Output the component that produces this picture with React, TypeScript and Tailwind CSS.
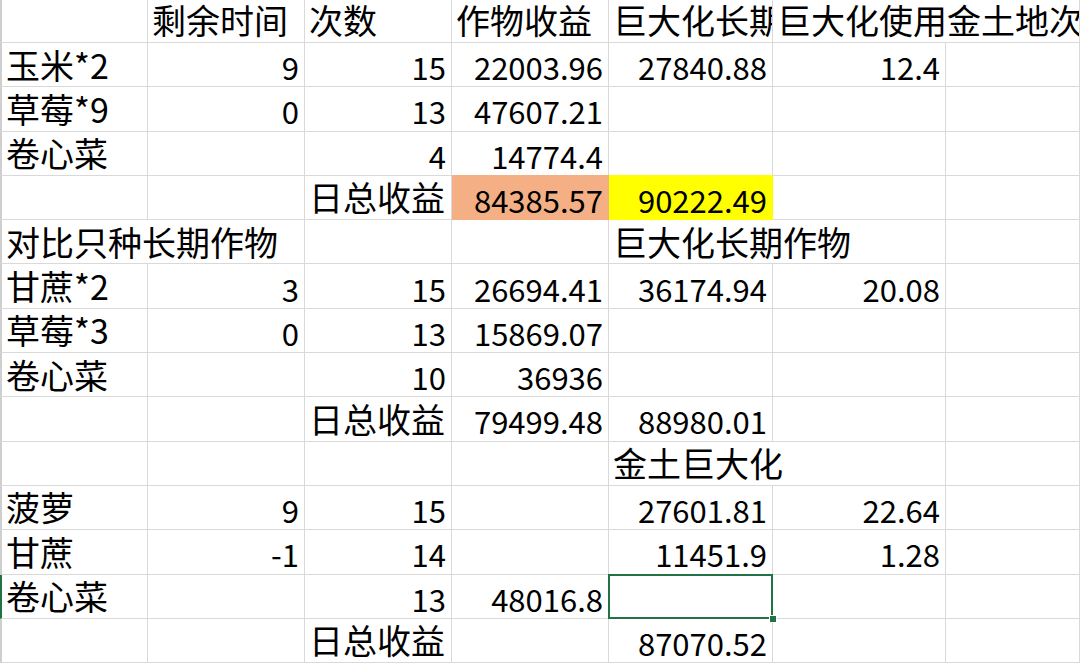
import React from 'react';

type Cell = {
  v?: string;
  num?: boolean;
  span?: number;
  bg?: string;
  sel?: boolean;
  clip?: boolean;
};

// column widths match the spreadsheet's visible columns
const colClass = 'grid-cols-[148px_157px_147px_157px_164px_173px_134px]';

const N = (v: string): Cell => ({ v, num: true });
const T = (v: string, span = 1): Cell => ({ v, span });
const E: Cell = {};

const rows: Cell[][] = [
  [E, T('剩余时间'), T('次数'), T('作物收益'), { v: '巨大化长期', clip: true }, { v: '巨大化使用金土地次', span: 2, clip: true }],
  [T('玉米*2'), N('9'), N('15'), N('22003.96'), N('27840.88'), N('12.4'), E],
  [T('草莓*9'), N('0'), N('13'), N('47607.21'), E, E, E],
  [T('卷心菜'), E, N('4'), N('14774.4'), E, E, E],
  [E, E, T('日总收益'), { v: '84385.57', num: true, bg: 'orange' }, { v: '90222.49', num: true, bg: 'yellow' }, E, E],
  [T('对比只种长期作物', 2), E, E, T('巨大化长期作物', 2), E],
  [T('甘蔗*2'), N('3'), N('15'), N('26694.41'), N('36174.94'), N('20.08'), E],
  [T('草莓*3'), N('0'), N('13'), N('15869.07'), E, E, E],
  [T('卷心菜'), E, N('10'), N('36936'), E, E, E],
  [E, E, T('日总收益'), N('79499.48'), N('88980.01'), E, E],
  [E, E, E, E, T('金土巨大化', 2), E],
  [T('菠萝'), N('9'), N('15'), E, N('27601.81'), N('22.64'), E],
  [T('甘蔗'), N('-1'), N('14'), E, N('11451.9'), N('1.28'), E],
  [T('卷心菜'), E, N('13'), N('48016.8'), { sel: true }, E, E],
  [E, E, T('日总收益'), E, N('87070.52'), E, E],
];

const SheetCell: React.FC<{ cell: Cell; first: boolean; row: number }> = ({ cell, first, row }) => {
  const span = cell.span === 2 ? 'col-span-2' : '';
  let fill = 'border-[#d9d9d9]';
  if (cell.bg === 'orange') fill = 'bg-[#f4b084] border-[#f4b084] shadow-[0_-1px_0_#f4b084]';
  if (cell.bg === 'yellow') fill = 'bg-[#ffff00] border-[#ffff00] shadow-[0_-1px_0_#ffff00]';
  const edge = first ? (row === 13 ? 'border-l-2 border-l-[#217346]' : 'border-l-2 border-l-[#cfcfcf]') : '';

  return (
    <div
      className={`relative flex items-end whitespace-nowrap border-r border-b ${fill} ${span} ${edge} ${
        cell.num ? 'justify-end pr-[5px] text-[31px]' : 'justify-start pl-[4px] text-[34px]'
      } pb-[1px] ${cell.clip ? 'overflow-hidden' : ''}`}
    >
      {cell.v && <span className="leading-[1.2]">{cell.v}</span>}
      {cell.sel && (
        <>
          <div className="absolute -top-px -left-px -right-px -bottom-px z-10 border-2 border-[#217346]" />
          <div className="absolute -bottom-[4px] -right-[4px] z-20 h-[6px] w-[6px] bg-[#217346] ring-1 ring-white" />
        </>
      )}
    </div>
  );
};

export default function App() {
  return (
    <div
      className="h-[664px] w-[1080px] overflow-hidden bg-white text-black"
      style={{ fontFamily: "'Noto Sans CJK SC', 'Noto Sans', sans-serif" }}
    >
      <div className={`grid ${colClass} grid-rows-[43px_repeat(14,44.3px)]`}>
        {rows.map((r, ri) =>
          r.map((c, ci) => <SheetCell key={`${ri}-${ci}`} cell={c} first={ci === 0} row={ri} />)
        )}
      </div>
    </div>
  );
}
